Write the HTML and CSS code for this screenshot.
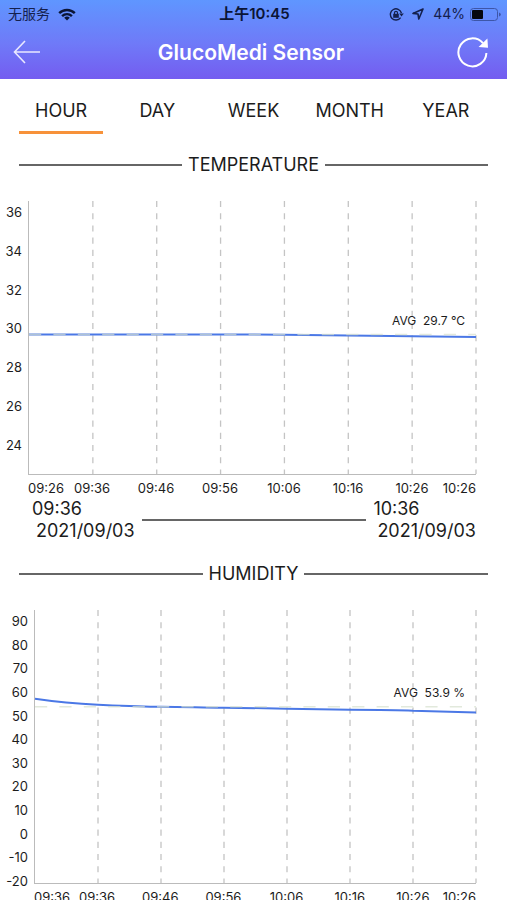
FILE: index.html
```
<!DOCTYPE html>
<html lang="en">
<head>
    <meta charset="UTF-8">
    <meta name="viewport" content="width=device-width, initial-scale=1.0">
    <title>GlucoMedi Sensor</title>
    <link rel="stylesheet" href="styles.css">
</head>
<body>
    <header class="header">
        <div class="status-bar">
            <div class="status-left">
                <span lang="zh">无服务</span>
                <svg width="18" height="13" viewBox="0 0 18 13" fill="none" stroke="#0b1535" stroke-width="2.4">
                    <path d="M1.2 5.2a11 11 0 0 1 15.6 0"/>
                    <path d="M4.1 8.1a7 7 0 0 1 9.8 0"/>
                    <path d="M9 12.6L6.2 9.8a4 4 0 0 1 5.6 0z" fill="#0b1535" stroke="none"/>
                </svg>
            </div>
            <div class="status-time" lang="zh">上午10:45</div>
            <div class="status-right">
                <svg width="15" height="13" viewBox="0 0 15 13" fill="none" stroke="#14204d">
                    <path d="M11.6 9.6A5.6 5.6 0 1 1 12.4 5" stroke-width="1.4"/>
                    <path d="M10.2 5.6h4.6l-2.3 3z" fill="#14204d" stroke="none"/>
                    <rect x="4.2" y="5.8" width="5.6" height="4" fill="#14204d" stroke="none"/>
                    <path d="M5.5 6V4.8a1.5 1.5 0 0 1 3 0V6" stroke-width="1.2"/>
                </svg>
                <svg class="location" width="12" height="12" viewBox="0 0 12 12" fill="none" stroke="#14204d" stroke-width="1.6" stroke-linejoin="round">
                    <path d="M11 1L1 5.4l5 .6.8 5z"/>
                </svg>
                <span>44%</span>
                <svg width="31" height="13" viewBox="0 0 31 13">
                    <rect x=".5" y=".5" width="27" height="12" rx="3" fill="none" stroke="#3d56a8"/>
                    <rect x="2" y="2" width="11" height="9" rx="1" fill="#05070f"/>
                    <path d="M29 4.5q1.8.6 1.8 2T29 8.5z" fill="#3d56a8"/>
                </svg>
            </div>
        </div>
        <div class="title-bar">
            <button class="icon-btn" aria-label="Back">
                <svg width="28" height="24" viewBox="0 0 28 24" fill="none" stroke="#e9e8ff" stroke-width="1.6">
                    <path d="M12 1L1.5 12 12 23M1.5 12H27"/>
                </svg>
            </button>
            <h1>GlucoMedi Sensor</h1>
            <button class="icon-btn" aria-label="Refresh">
                <svg width="32" height="32" viewBox="0 0 32 32" fill="none" stroke="#fff" stroke-width="2">
                    <path d="M29.4 17A14 14 0 1 1 26 7.2"/>
                    <path d="M30.4 2.4l.6 9.4-9.4-.8z" fill="#fff" stroke="none"/>
                </svg>
            </button>
        </div>
    </header>

    <nav class="tabs">
        <button class="tab active">HOUR</button>
        <button class="tab">DAY</button>
        <button class="tab">WEEK</button>
        <button class="tab">MONTH</button>
        <button class="tab">YEAR</button>
    </nav>

    <main>
        <section>
            <h2>TEMPERATURE</h2>
            <div class="chart temperature">
                <div class="y-axis">
                    <span>36</span>
                    <span>34</span>
                    <span>32</span>
                    <span>30</span>
                    <span>28</span>
                    <span>26</span>
                    <span>24</span>
                </div>
                <div class="plot">
                    <svg viewBox="0 0 448 274" preserveAspectRatio="none">
                        <path class="grid" d="M64 0V274M128 0V274M192 0V274M256 0V274M320 0V274M384 0V274M448 0V274"/>
                        <path class="line" d="M0 134H210C280 134 330 136 448 136.5"/>
                        <path class="avg-line" d="M0 134H448"/>
                    </svg>
                    <span class="avg">AVG&nbsp; 29.7 °C</span>
                </div>
                <div class="x-axis">
                    <span>09:26</span>
                    <span>09:36</span>
                    <span>09:46</span>
                    <span>09:56</span>
                    <span>10:06</span>
                    <span>10:16</span>
                    <span>10:26</span>
                    <span>10:26</span>
                </div>
            </div>
            <div class="range">
                <div class="moment">
                    <span>09:36</span>
                    <span class="date">2021/09/03</span>
                </div>
                <div class="moment">
                    <span>10:36</span>
                    <span class="date">2021/09/03</span>
                </div>
            </div>
        </section>

        <section>
            <h2>HUMIDITY</h2>
            <div class="chart humidity">
                <div class="y-axis">
                    <span>90</span>
                    <span>80</span>
                    <span>70</span>
                    <span>60</span>
                    <span>50</span>
                    <span>40</span>
                    <span>30</span>
                    <span>20</span>
                    <span>10</span>
                    <span>0</span>
                    <span>-10</span>
                    <span>-20</span>
                </div>
                <div class="plot">
                    <svg viewBox="0 0 441 274" preserveAspectRatio="none">
                        <path class="grid" d="M63 0V274M126 0V274M189 0V274M252 0V274M315 0V274M378 0V274M441 0V274"/>
                        <path class="line" d="M0 89C20 92 40 94 63 95C85 96 105 97 126 97C150 97 168 98 189 98L252 99L315 100C340 100 360 100 378 101L441 103"/>
                        <path class="avg-line" d="M0 97H441"/>
                    </svg>
                    <span class="avg">AVG&nbsp; 53.9 %</span>
                </div>
                <div class="x-axis">
                    <span>09:36</span>
                    <span>09:36</span>
                    <span>09:46</span>
                    <span>09:56</span>
                    <span>10:06</span>
                    <span>10:16</span>
                    <span>10:26</span>
                    <span>10:26</span>
                </div>
            </div>
        </section>
    </main>
</body>
</html>
```
FILE: styles.css
```
* {
    box-sizing: border-box;
}

html {
    scrollbar-width: none;
}

body {
    margin: 0;
    background: #fff;
    color: #1c1c1c;
    font-family: Inter, "Noto Sans CJK SC", sans-serif;
}

svg {
    display: block;
}

button {
    padding: 0;
    border: none;
    background: none;
    color: inherit;
    font: inherit;
    cursor: pointer;
}

.header {
    height: 79px;
    background: linear-gradient(#5f96ff, #6f7af8 55%, #745cf0);
}

.status-bar {
    display: grid;
    grid-template-columns: 1fr auto 1fr;
    align-items: center;
    height: 28px;
    padding: 0 6px 0 8px;
    color: #14204d;
    font-size: 14px;
    line-height: 20px;
}

.status-left,
.status-right {
    display: flex;
    align-items: center;
    gap: 8px;
}

.status-right {
    justify-content: flex-end;
    gap: 5px;
}

.location {
    margin: 0 4px 0 3px;
}

.status-time {
    color: #0b1535;
    font-size: 15px;
    font-weight: 600;
}

.title-bar {
    display: grid;
    grid-template-columns: 1fr auto 1fr;
    align-items: center;
    height: 48px;
    padding: 0 18px 0 13px;
}

.icon-btn {
    justify-self: start;
}

.icon-btn:last-child {
    justify-self: end;
}

h1 {
    margin: 0;
    color: #fff;
    font-size: 21px;
    font-weight: 600;
}

.tabs {
    display: grid;
    grid-template-columns: repeat(5, 1fr);
    padding: 11px 13px 0;
}

.tab {
    height: 44px;
    margin: 0 6px;
    padding-bottom: 1px;
    border-bottom: 3px solid transparent;
    font-size: 18px;
}

.tab.active {
    border-bottom-color: #f7923a;
}

h2 {
    display: flex;
    align-items: center;
    gap: 6px;
    margin: 0;
    padding: 0 19px;
    font-size: 18px;
    font-weight: 400;
    line-height: 24px;
}

h2::before,
h2::after {
    content: "";
    flex: 1;
    height: 2px;
    background: #666;
}

main {
    padding-top: 19px;
}

.chart {
    display: grid;
    grid-template-columns: 28px 1fr;
    margin-top: 24px;
    padding-right: 31px;
    font-size: 12px;
    line-height: 16px;
}

.y-axis {
    display: flex;
    flex-direction: column;
    justify-content: space-between;
    padding: 3px 6px 22px 0;
    font-size: 13px;
    text-align: right;
}

.humidity {
    grid-template-columns: 34px 1fr;
}

.humidity .y-axis {
    margin-bottom: -5px;
    padding-bottom: 0;
}

.plot {
    position: relative;
    height: 274px;
    border-left: 1px solid #bbb;
    border-bottom: 1px solid #bbb;
}

.plot svg {
    width: 100%;
    height: 100%;
    overflow: visible;
}

.plot path {
    fill: none;
    vector-effect: non-scaling-stroke;
}

.grid {
    stroke: #c4c4c4;
    stroke-width: 1.3;
    stroke-dasharray: 6.1;
}

.line {
    stroke: #4b78e6;
    stroke-width: 2;
}

.avg-line {
    stroke: #d5dfcd;
    stroke-opacity: 0.7;
    stroke-width: 1.5;
    stroke-dasharray: 12.2;
}

.avg {
    position: absolute;
    top: 112px;
    right: 11px;
}

.humidity .avg {
    top: 75px;
}

.x-axis {
    grid-column: 2;
    display: grid;
    grid-template-columns: minmax(0, 1fr) repeat(6, minmax(0, 2fr)) minmax(0, 1fr);
    justify-items: center;
    padding-top: 5px;
    font-size: 13px;
}

.x-axis span:first-child {
    justify-self: start;
}

.x-axis span:last-child {
    justify-self: end;
}

.range {
    display: flex;
    align-items: center;
    gap: 7px;
    padding: 2px 31px 0 32px;
    font-size: 18px;
    line-height: 22px;
}

.range::before {
    content: "";
    order: 1;
    flex: 1;
    height: 2px;
    background: #666;
}

.moment {
    display: flex;
    flex-direction: column;
}

.moment:last-child {
    order: 2;
}

.date {
    padding-left: 4px;
}

section + section {
    margin-top: 20px;
}
```
